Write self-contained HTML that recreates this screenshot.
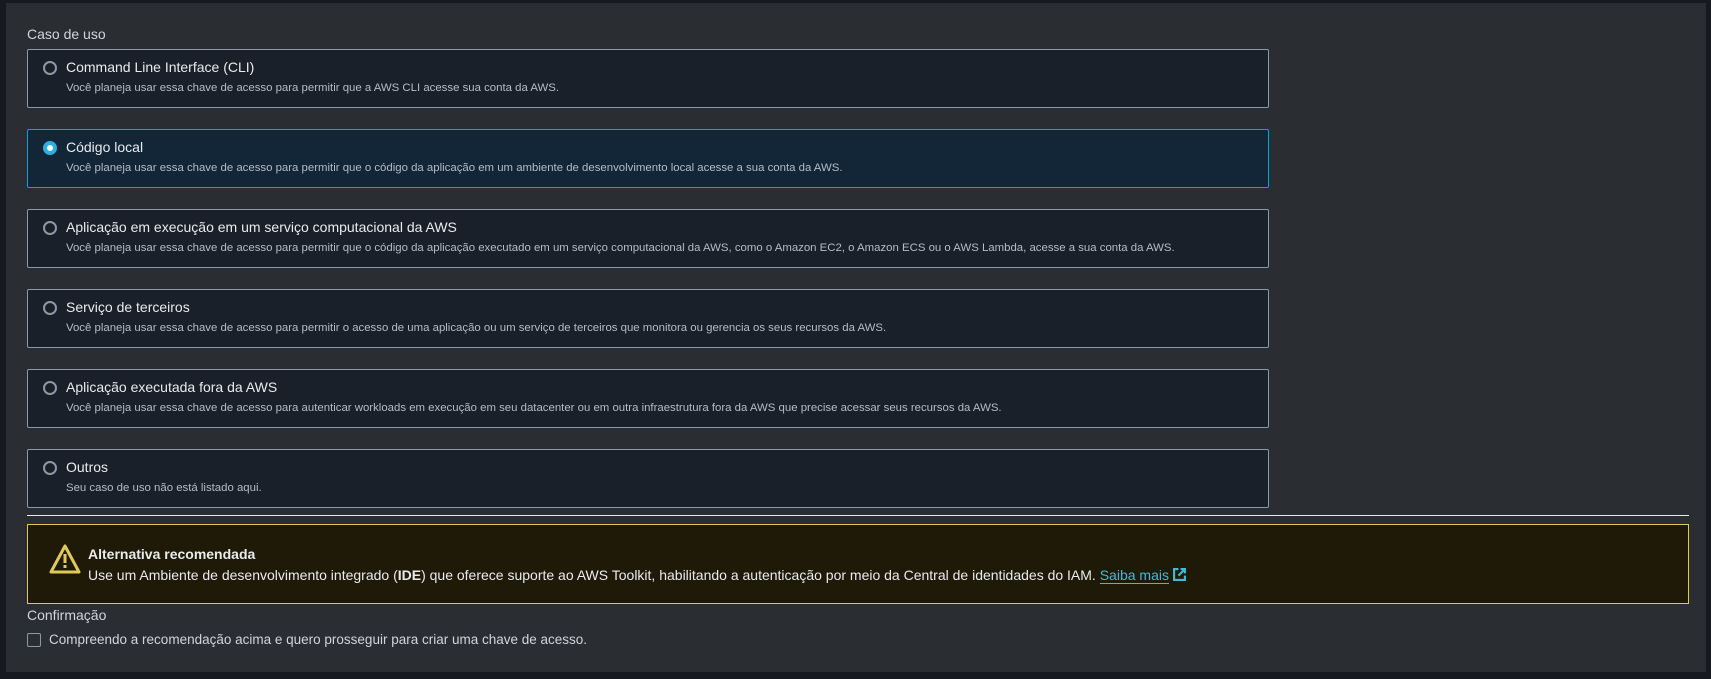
<!DOCTYPE html>
<html><head><meta charset="utf-8"><style>
*{box-sizing:border-box;margin:0;padding:0}
body{width:1711px;height:679px;background:#16191f;font-family:"Liberation Sans",sans-serif;color:#d1d5db;position:relative;overflow:hidden}
.panel{position:absolute;left:6px;top:3px;width:1700px;height:669px;background:#2a2e33}
.abs{position:absolute}
.lbl{font-size:14px;color:#d1d5db}
.card{position:absolute;left:27px;width:1242px;height:59px;background:#1a2029;border:1px solid #8d99a8;border-radius:2px}
.card.sel{background:#132638;border-color:#0aa4d8}
.radio{position:absolute;left:15px;top:11px;width:14px;height:14px;border-radius:50%;border:2px solid #8d99a8}
.sel .radio{border:4px solid #2bb0e0;background:#fff}
.t{position:absolute;left:38px;top:9px;font-size:14px;color:#e9ebed}
.d{position:absolute;left:38px;top:32px;font-size:11.4px;color:#b4bcc6}
.alert{position:absolute;left:27px;top:524px;width:1662px;height:80px;background:#1f1908;border:1px solid #e0ca57}
</style></head><body>
<div class="panel"></div>
<div class="abs lbl" style="left:27px;top:26px">Caso de uso</div>

<div class="card" style="top:49px"><div class="radio"></div><div class="t">Command Line Interface (CLI)</div><div class="d">Você planeja usar essa chave de acesso para permitir que a AWS CLI acesse sua conta da AWS.</div></div>
<div class="card sel" style="top:129px"><div class="radio"></div><div class="t">Código local</div><div class="d">Você planeja usar essa chave de acesso para permitir que o código da aplicação em um ambiente de desenvolvimento local acesse a sua conta da AWS.</div></div>
<div class="card" style="top:209px"><div class="radio"></div><div class="t">Aplicação em execução em um serviço computacional da AWS</div><div class="d">Você planeja usar essa chave de acesso para permitir que o código da aplicação executado em um serviço computacional da AWS, como o Amazon EC2, o Amazon ECS ou o AWS Lambda, acesse a sua conta da AWS.</div></div>
<div class="card" style="top:289px"><div class="radio"></div><div class="t">Serviço de terceiros</div><div class="d">Você planeja usar essa chave de acesso para permitir o acesso de uma aplicação ou um serviço de terceiros que monitora ou gerencia os seus recursos da AWS.</div></div>
<div class="card" style="top:369px"><div class="radio"></div><div class="t">Aplicação executada fora da AWS</div><div class="d">Você planeja usar essa chave de acesso para autenticar workloads em execução em seu datacenter ou em outra infraestrutura fora da AWS que precise acessar seus recursos da AWS.</div></div>
<div class="card" style="top:449px"><div class="radio"></div><div class="t">Outros</div><div class="d">Seu caso de uso não está listado aqui.</div></div>

<div class="abs" style="left:27px;top:515px;width:1662px;height:1px;background:#e9ebed"></div>

<div class="alert">
<svg class="abs" style="left:20px;top:18px" width="34" height="32" viewBox="0 0 34 32"><path d="M17 3 L31 29 H3 Z" fill="none" stroke="#e0ca57" stroke-width="3" stroke-linejoin="round"/><rect x="15.5" y="11" width="3" height="9" fill="#e0ca57"/><rect x="15.5" y="22" width="3" height="3" fill="#e0ca57"/></svg>
<div class="abs" style="left:60px;top:21px;font-size:14px;font-weight:bold;color:#e9ebed">Alternativa recomendada</div>
<div class="abs" style="left:60px;top:42px;font-size:14px;color:#e9ebed;white-space:nowrap">Use um Ambiente de desenvolvimento integrado (<b>IDE</b>) que oferece suporte ao AWS Toolkit, habilitando a autenticação por meio da Central de identidades do IAM. <span style="color:#44b9d6;border-bottom:1px solid #44b9d6">Saiba mais</span> <svg width="13" height="13" viewBox="0 0 12 12" style="vertical-align:-1px"><path d="M5 1H1V11H11V7" fill="none" stroke="#44b9d6" stroke-width="2"/><path d="M7 1H11V5M11 1L5 7" fill="none" stroke="#44b9d6" stroke-width="2"/></svg></div>
</div>

<div class="abs lbl" style="left:27px;top:607px">Confirmação</div>
<div class="abs" style="left:27px;top:633px;width:14px;height:14px;border:1px solid #8d99a8;border-radius:2px"></div>
<div class="abs" style="left:49px;top:632px;font-size:13.5px;color:#d1d5db">Compreendo a recomendação acima e quero prosseguir para criar uma chave de acesso.</div>
</body></html>
